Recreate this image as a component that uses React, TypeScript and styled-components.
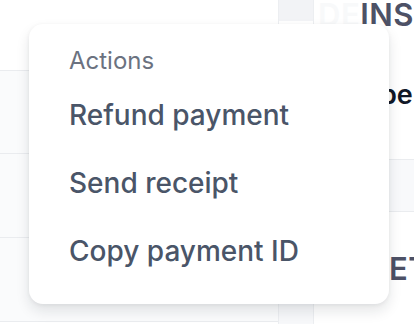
import React from "react";
import styled, { createGlobalStyle } from "styled-components";

const Global = createGlobalStyle`
  html, body { margin: 0; padding: 0; background: #ffffff; }
  body { font-family: Inter, "Noto Sans", sans-serif; -webkit-font-smoothing: antialiased; }
  #root { width: 414px; height: 324px; overflow: hidden; }
`;

const Page = styled.div`
  position: relative;
  width: 414px;
  height: 324px;
  display: grid;
  grid-template-columns: 278px 35px minmax(0, 1fr);
  background: #ffffff;
  overflow: hidden;
`;

const Table = styled.div`
  display: flex;
  flex-direction: column;
`;

const TableRow = styled.div<{ $h: number; $head?: boolean }>`
  height: ${(p) => p.$h}px;
  flex: none;
  box-sizing: border-box;
  border-bottom: 1px solid #eaecef;
  background: ${(p) => (p.$head ? "#ffffff" : "#fafbfc")};
`;

const Gutter = styled.div`
  display: flex;
  flex-direction: column;
  border-left: 1px solid #eceef1;
`;

const GutterCap = styled.div`
  height: 21px;
  background: #f2f3f6;
`;

const GutterBody = styled.div`
  flex: 1;
  background: #ffffff;
  display: flex;
  flex-direction: column;
  justify-content: flex-end;
`;

const GutterFoot = styled.div`
  height: 40px;
  background: #f7f8fa;
`;

const Side = styled.div`
  border-left: 1px solid #eceef1;
  display: flex;
  flex-direction: column;
  padding-left: 46px;
  white-space: nowrap;
  overflow: hidden;
  min-width: 0;
`;

const Heading = styled.div<{ $mt: number; $indent?: number }>`
  margin-top: ${(p) => p.$mt}px;
  margin-left: ${(p) => p.$indent ?? 0}px;
  font-size: 31px;
  line-height: 36px;
  font-weight: 600;
  letter-spacing: 0.5px;
  color: #4d5166;
`;

const Faint = styled.span`
  color: #f8f9fa;
  margin-left: -42px;
`;

const Value = styled.div`
  margin-top: 46px;
  margin-left: -12px;
  font-size: 27px;
  line-height: 32px;
  font-weight: 600;
  color: #111827;
`;

const Band = styled.div`
  margin-top: 48px;
  margin-left: -46px;
  height: 53px;
  box-sizing: border-box;
  background: #f8f9fb;
  border-top: 1px solid #eaecef;
  border-bottom: 1px solid #eaecef;
`;

const Menu = styled.div`
  position: absolute;
  left: 29px;
  top: 24px;
  width: 360px;
  height: 280px;
  box-sizing: border-box;
  background: #ffffff;
  border-radius: 14px;
  box-shadow: 0 7px 14px rgba(17, 24, 39, 0.11), 0 1px 4px rgba(17, 24, 39, 0.06);
  padding: 8px 0;
  display: flex;
  flex-direction: column;
`;

const MenuLabel = styled.div`
  padding: 13px 40px 4px;
  font-size: 24px;
  line-height: 32px;
  color: #6b7280;
  font-weight: 400;
`;

const MenuItem = styled.div`
  padding: 14px 40px;
  font-size: 28px;
  line-height: 40px;
  font-weight: 500;
  color: #4a5568;
  cursor: pointer;
`;

export default function App() {
  return (
    <>
      <Global />
      <Page>
        <Table>
          <TableRow $h={71} $head />
          <TableRow $h={83} />
          <TableRow $h={84} />
          <TableRow $h={84} />
        </Table>
        <Gutter>
          <GutterCap />
          <GutterBody>
            <GutterFoot />
          </GutterBody>
        </Gutter>
        <Side>
          <Heading $mt={-3}>
            <Faint>DE</Faint>INS
          </Heading>
          <Value>Type</Value>
          <Band />
          <Heading $mt={39} $indent={29}>ET</Heading>
        </Side>
        <Menu role="menu">
          <MenuLabel>Actions</MenuLabel>
          <MenuItem role="menuitem">Refund payment</MenuItem>
          <MenuItem role="menuitem">Send receipt</MenuItem>
          <MenuItem role="menuitem">Copy payment ID</MenuItem>
        </Menu>
      </Page>
    </>
  );
}
